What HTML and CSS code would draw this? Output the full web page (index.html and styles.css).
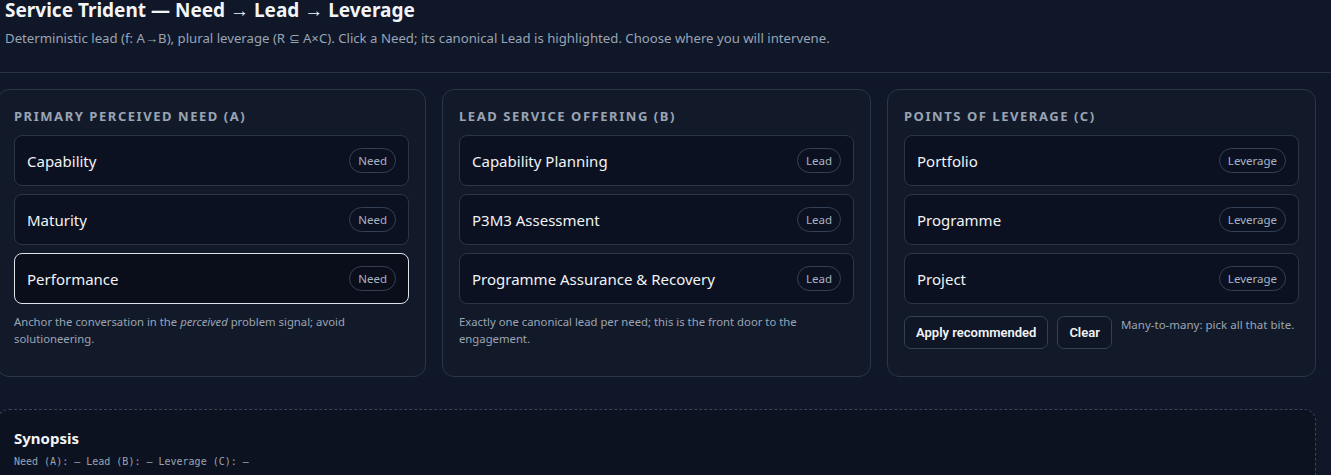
FILE: index.html
```html
<!DOCTYPE html>
<html>
<head>
<meta charset="utf-8">
<title>Service Trident</title>
<link rel="stylesheet" href="styles.css">
</head>
<body>
<header class="header">
  <h1 class="title">Service Trident — Need → Lead → Leverage</h1>
  <p class="subtitle">Deterministic lead (f: A→B), plural leverage (R ⊆ A×C). Click a Need; its canonical Lead is highlighted. Choose where you will intervene.</p>
</header>
<main class="main">
  <section class="grid">
    <div class="card">
      <h2 class="card-title">Primary Perceived Need (A)</h2>
      <div class="list">
        <div class="item"><span class="item-label">Capability</span><span class="badge">Need</span></div>
        <div class="item"><span class="item-label">Maturity</span><span class="badge">Need</span></div>
        <div class="item item-active"><span class="item-label">Performance</span><span class="badge">Need</span></div>
      </div>
      <p class="note">Anchor the conversation in the <em>perceived</em> problem signal; avoid solutioneering.</p>
    </div>
    <div class="card">
      <h2 class="card-title">Lead Service Offering (B)</h2>
      <div class="list">
        <div class="item"><span class="item-label">Capability Planning</span><span class="badge">Lead</span></div>
        <div class="item"><span class="item-label">P3M3 Assessment</span><span class="badge">Lead</span></div>
        <div class="item"><span class="item-label">Programme Assurance &amp; Recovery</span><span class="badge">Lead</span></div>
      </div>
      <p class="note">Exactly one canonical lead per need; this is the front door to the engagement.</p>
    </div>
    <div class="card">
      <h2 class="card-title">Points of Leverage (C)</h2>
      <div class="list">
        <div class="item"><span class="item-label">Portfolio</span><span class="badge">Leverage</span></div>
        <div class="item"><span class="item-label">Programme</span><span class="badge">Leverage</span></div>
        <div class="item"><span class="item-label">Project</span><span class="badge">Leverage</span></div>
      </div>
      <div class="actions">
        <button class="btn">Apply recommended</button>
        <button class="btn">Clear</button>
        <span class="hint">Many-to-many: pick all that bite.</span>
      </div>
    </div>
  </section>
  <section class="synopsis">
    <h3 class="synopsis-title">Synopsis</h3>
    <p class="synopsis-line">Need (A): — Lead (B): — Leverage (C): —</p>
  </section>
</main>
</body>
</html>
```
FILE: styles.css
```css
* { box-sizing: border-box; }
html, body { margin: 0; padding: 0; }
body {
  background: #0f1729;
  color: #e5e7eb;
  font-family: "Noto Sans", "Open Sans", sans-serif;
  overflow: hidden;
  height: 475px;
}
.header {
  padding: 0 16px 0 5px;
  border-bottom: 1px solid #2a3344;
  height: 73px;
}
.title {
  margin: 0;
  font-size: 19px;
  line-height: 20px;
  font-weight: 700;
  color: #f3f4f6;
}
.subtitle {
  margin: 10px 0 0;
  font-size: 13.2px;
  line-height: 16px;
  color: #9aa4b4;
}
.main {
  margin-left: -3px;
  padding: 16px 15px 0 0;
}
.grid {
  display: grid;
  grid-template-columns: repeat(3, 1fr);
  gap: 16px;
}
.card {
  background: #121a2a;
  border: 1px solid #2b3547;
  border-radius: 12px;
  padding: 16px 16px 27px;
}
.card-title {
  margin: 0 0 8px;
  font-size: 13px;
  line-height: 21px;
  font-weight: 700;
  letter-spacing: 1.55px;
  text-transform: uppercase;
  color: #9aa4b4;
}
.list {
  display: flex;
  flex-direction: column;
  gap: 8px;
}
.item {
  display: flex;
  align-items: center;
  justify-content: space-between;
  background: #0b1120;
  border: 1px solid #2b3547;
  border-radius: 8px;
  padding: 12px;
  height: 51px;
}
.item-active {
  border-color: #dfe3ea;
  background: #090e1a;
}
.item-label {
  font-size: 15px;
  color: #f1f3f6;
}
.badge {
  font-size: 11.5px;
  line-height: 23px;
  height: 25px;
  padding: 0 8px;
  border: 1px solid #344055;
  border-radius: 999px;
  color: #a9b3c2;
}
.note {
  margin: 9px 0 0;
  font-size: 11.3px;
  line-height: 17px;
  color: #9aa4b4;
}
.actions {
  display: flex;
  align-items: flex-start;
  gap: 9px;
  margin-top: 12px;
}
.btn {
  font-family: Roboto, "Liberation Sans", sans-serif;
  font-size: 13px;
  font-weight: 600;
  color: #f3f4f6;
  background: #0f1626;
  border: 1px solid #344055;
  border-radius: 7px;
  height: 33px;
  padding: 0 11px;
}
.hint {
  font-size: 11.5px;
  line-height: 16px;
  color: #9aa4b4;
  padding-top: 1px;
}
.synopsis {
  margin-top: 32px;
  background: #0c1220;
  border: 1px dashed #3a4456;
  border-radius: 12px;
  padding: 18px 16px 0;
  height: 80px;
}
.synopsis-title {
  margin: 0;
  font-size: 15px;
  line-height: 20px;
  font-weight: 700;
  color: #f3f4f6;
}
.synopsis-line {
  margin: 8px 0 0;
  font-family: "DejaVu Sans Mono", monospace;
  font-size: 10px;
  color: #9aa4b4;
}
```
